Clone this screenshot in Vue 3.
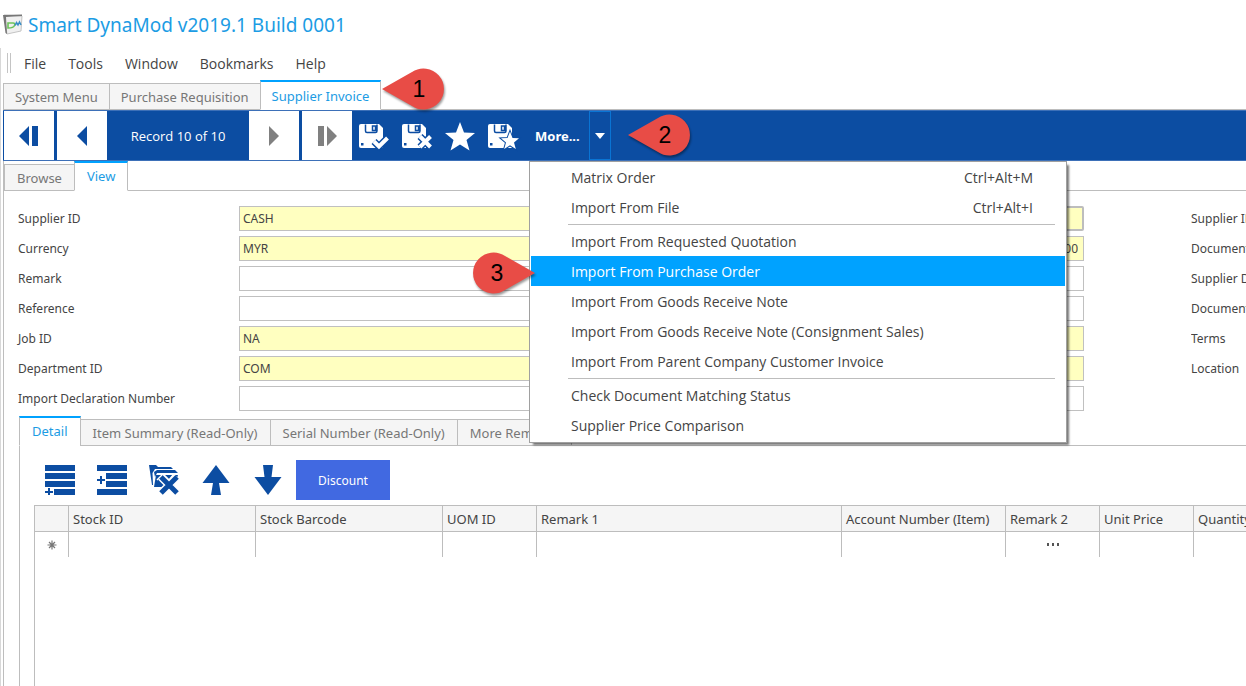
<template>
  <div class="app">
    <header class="titlebar">
      <svg
        class="logo"
        viewBox="0 0 20 21"
        aria-hidden="true"
      >
        <path
          d="M1 1 L19 2 L18 17 L4 20 Z"
          fill="#f0f0f0"
          stroke="#c4c4c4"
        />
        <path
          d="M0 1 L19 0.5 L19 2 L3 3 L4 20 L2.5 19 Z"
          fill="#777"
        />
        <path
          d="M5 9 H10 Q12.5 9 11.5 11.5 Q10.5 14 5 14 Z"
          fill="none"
          stroke="#6cc35a"
          stroke-width="1.6"
        />
        <path
          d="M12 11.5 L13.5 8.5 L15 11 L16.5 8 L18 11"
          fill="none"
          stroke="#3b8fc6"
          stroke-width="1.5"
        />
      </svg>
      <h1>Smart DynaMod v2019.1 Build 0001</h1>
    </header>

    <div class="frame">
      <nav class="menubar">
        <span class="grip" />
        <button
          v-for="m in menus"
          :key="m"
          type="button"
        >
          {{ m }}
        </button>
      </nav>

      <div class="tabs doc-tabs">
        <button
          v-for="t in docTabs"
          :key="t"
          type="button"
          class="tab"
          :class="{ active: t === docTab }"
          @click="docTab = t"
        >
          {{ t }}
        </button>
        <div class="callout-anchor">
          <svg
            class="callout"
            viewBox="0 0 66 46"
          >
            <path
              class="pin"
              d="M1 22 L31 5 A20.5 20.5 0 1 1 31 39 Z"
            />
            <text
              x="38"
              y="30"
            >1</text>
          </svg>
        </div>
      </div>

      <div class="toolbar">
        <button
          type="button"
          class="nav"
          aria-label="First"
        >
          <svg
            viewBox="0 0 20 20"
            fill="#0c4da2"
          ><path d="M0 10 L10 0 V20 Z M13 0 H19 V20 H13 Z" /></svg>
        </button>
        <button
          type="button"
          class="nav"
          aria-label="Previous"
        >
          <svg
            viewBox="0 0 20 20"
            fill="#0c4da2"
          ><path d="M5 10 L15 0 V20 Z" /></svg>
        </button>
        <span class="record">Record 10 of 10</span>
        <button
          type="button"
          class="nav"
          aria-label="Next"
        >
          <svg
            viewBox="0 0 20 20"
            fill="#808080"
          ><path d="M15 10 L5 0 V20 Z" /></svg>
        </button>
        <button
          type="button"
          class="nav"
          aria-label="Last"
        >
          <svg
            viewBox="0 0 20 20"
            fill="#808080"
          ><path d="M20 10 L10 0 V20 Z M1 0 H7 V20 H1 Z" /></svg>
        </button>

        <div class="actions">
          <button
            v-for="a in actions"
            :key="a"
            type="button"
            :aria-label="a"
          >
            <svg
              viewBox="0 0 30 30"
              fill="#fff"
            >
              <template v-if="a !== 'Bookmark'">
                <path d="M2 3 H20 L24 7 V27 H2 Q0 27 0 25 V5 Q0 3 2 3 Z" />
                <path
                  d="M6.500 3.500 V10 Q6.500 11.500 8 11.500 H16.500 Q18 11.500 18 10 V3.500 M13.500 5 H16.500 V9.500 H13.500 Z"
                  fill="none"
                  stroke="#0c4da2"
                  stroke-width="1.500"
                />
                <path
                  d="M2 22 H4.500 V24.500 H2 Z"
                  fill="#0c4da2"
                />
              </template>
              <template v-if="marks[a]">
                <path
                  :d="marks[a]"
                  class="mark halo"
                />
                <path
                  :d="marks[a]"
                  class="mark"
                />
              </template>
              <path
                v-if="a === 'Bookmark'"
                d="M15 1 L19 11.5 L30 12 L21.5 19 L24.5 29.5 L15 23.5 L5.5 29.5 L8.5 19 L0 12 L11 11.5 Z"
              />
              <path
                v-if="a === 'Save and Bookmark'"
                d="M22 10.5 L24.5 17 L31 17.3 L26 21.5 L27.8 28 L22 24.3 L16.2 28 L18 21.5 L13 17.3 L19.5 17 Z"
                class="star"
              />
            </svg>
          </button>
        </div>

        <div class="more">
          <button
            type="button"
            class="more-btn"
          >
            More...
          </button>
          <button
            type="button"
            class="more-drop"
            aria-label="Open menu"
            @click="open = !open"
          >
            <svg viewBox="0 0 10 6"><path
              d="M0 0 H10 L5 6 Z"
              fill="#fff"
            /></svg>
          </button>

          <ul
            v-if="open"
            class="popup"
          >
            <li
              v-for="item in popupItems"
              :key="item.text"
              :class="{ group: item.group }"
            >
              <button
                type="button"
                :class="{ current: item.current }"
              >
                <span>{{ item.text }}</span>
                <span v-if="item.keys">{{ item.keys }}</span>
              </button>
              <svg
                v-if="item.current"
                class="callout"
                viewBox="0 0 66 46"
              >
                <path
                  class="pin"
                  d="M63 21 L33 4 A20.5 20.5 0 1 0 33 38 Z"
                />
                <text
                  x="25"
                  y="29"
                >3</text>
              </svg>
            </li>
          </ul>
        </div>

        <svg
          class="callout inline"
          viewBox="0 0 66 46"
        >
          <path
            class="pin"
            d="M1 22 L31 5 A20.5 20.5 0 1 1 31 39 Z"
          />
          <text
            x="38"
            y="30"
          >2</text>
        </svg>
      </div>

      <div class="page">
        <div class="tabs view-tabs">
          <button
            v-for="t in viewTabs"
            :key="t"
            type="button"
            class="tab"
            :class="{ active: t === viewTab }"
            @click="viewTab = t"
          >
            {{ t }}
          </button>
        </div>

        <form
          class="form"
          @submit.prevent
        >
          <div
            v-for="f in fields"
            :key="f.id"
            class="row"
          >
            <label :for="f.id">{{ f.label }}</label>
            <div class="inputs">
              <input
                :id="f.id"
                v-model="f.value"
                type="text"
                :class="{ required: f.required }"
              >
              <input
                v-if="f.id === 'currency'"
                v-model="rate"
                type="text"
                class="required rate"
                aria-label="Rate"
              >
              <button
                v-if="f.id === 'supplier'"
                type="button"
                class="lookup"
                aria-label="Lookup"
              />
            </div>
            <span class="side">{{ f.side }}</span>
          </div>
        </form>

        <div class="tabs detail-tabs">
          <button
            v-for="t in detailTabs"
            :key="t"
            type="button"
            class="tab"
            :class="{ active: t === detailTab }"
            @click="detailTab = t"
          >
            {{ t }}
          </button>
        </div>

        <section class="detail">
          <div class="detail-tools">
            <button
              type="button"
              class="tool"
              aria-label="Add row"
            >
              <svg viewBox="0 0 30 30"><path d="M0 0 H30 V6 H0 Z M0 8 H30 V14 H0 Z M0 16 H30 V22 H0 Z M9 24 H30 V30 H9 Z M3 23 H5 V26 H8 V28 H5 V30 H3 V28 H0 V26 H3 Z" /></svg>
            </button>
            <button
              type="button"
              class="tool"
              aria-label="Insert row"
            >
              <svg viewBox="0 0 30 30"><path d="M0 0 H30 V6 H0 Z M9 8 H30 V14 H9 Z M9 16 H30 V22 H9 Z M0 24 H30 V30 H0 Z M3 11 H5 V14 H8 V16 H5 V19 H3 V16 H0 V14 H3 Z" /></svg>
            </button>
            <button
              type="button"
              class="tool"
              aria-label="Delete rows"
            >
              <svg viewBox="0 0 30 30">
                <path d="M0 0 H7 L9 2 H22 L24 4 H6 L3.500 8 L4 20 H3 Z" />
                <path d="M5 7 L8 5 H26 L29 8 H8 L6 12 Z" />
                <path d="M7 10 H29 L25 22 H5 Z" />
                <path
                  d="M8 15 L14 9 L20 15 L25 9"
                  fill="none"
                  stroke="#fff"
                  stroke-width="1.5"
                />
                <path
                  d="M12 12 L28 28 M28 12 L12 28"
                  stroke="#fff"
                  stroke-width="8"
                />
                <path
                  d="M12 12 L28 28 M28 12 L12 28"
                  stroke="#0c4da2"
                  stroke-width="5"
                />
              </svg>
            </button>
            <button
              type="button"
              class="tool"
              aria-label="Move up"
            >
              <svg viewBox="0 0 30 30"><path d="M15 0 L28.500 18 H18 L20 30 H10 L12 18 H1.500 Z" /></svg>
            </button>
            <button
              type="button"
              class="tool"
              aria-label="Move down"
            >
              <svg viewBox="0 0 30 30"><path d="M15 30 L28.500 12 H18.500 L20 0 H10 L11.500 12 H1.500 Z" /></svg>
            </button>
            <button
              type="button"
              class="discount"
            >
              Discount
            </button>
          </div>

          <div class="grid">
            <table>
              <colgroup>
                <col class="c-mark">
                <col class="c-wide">
                <col class="c-wide">
                <col class="c-small">
                <col>
                <col class="c-account">
                <col class="c-small">
                <col class="c-small">
                <col class="c-last">
              </colgroup>
              <thead>
                <tr>
                  <th />
                  <th
                    v-for="c in columns"
                    :key="c"
                  >
                    {{ c }}
                  </th>
                </tr>
              </thead>
              <tbody>
                <tr>
                  <td class="mark-cell">
                    <svg viewBox="0 0 10 10"><path
                      d="M5 0.500 V9.500 M0.500 5 H9.500 M2 2 L8 8 M8 2 L2 8"
                      stroke="#777"
                      stroke-width="1.200"
                    /></svg>
                  </td>
                  <td
                    v-for="c in columns"
                    :key="c"
                  >
                    <svg
                      v-if="c === 'Remark 2'"
                      class="dots"
                      viewBox="0 0 14 3"
                    ><path d="M1 0 H3 V3 H1 Z M6 0 H8 V3 H6 Z M11 0 H13 V3 H11 Z" /></svg>
                  </td>
                </tr>
              </tbody>
            </table>
          </div>
        </section>
      </div>
    </div>
  </div>
</template>

<script setup>
import { ref } from 'vue'

const menus = ['File', 'Tools', 'Window', 'Bookmarks', 'Help']
const docTabs = ['System Menu', 'Purchase Requisition', 'Supplier Invoice']
const viewTabs = ['Browse', 'View']
const detailTabs = ['Detail', 'Item Summary (Read-Only)', 'Serial Number (Read-Only)', 'More Remarks']

const docTab = ref('Supplier Invoice')
const viewTab = ref('View')
const detailTab = ref('Detail')
const open = ref(true)
const rate = ref('1.00')

const actions = ['Save', 'Save and Close', 'Bookmark', 'Save and Bookmark']
const marks = {
  Save: 'M15 20.5 L20 25.500 L28.500 17',
  'Save and Close': 'M18 15.500 L28.500 26 M28.500 15.500 L18 26',
}

// group: starts with a separator line
const popupItems = [
  { text: 'Matrix Order', keys: 'Ctrl+Alt+M' },
  { text: 'Import From File', keys: 'Ctrl+Alt+I' },
  { text: 'Import From Requested Quotation', group: true },
  { text: 'Import From Purchase Order', current: true },
  { text: 'Import From Goods Receive Note' },
  { text: 'Import From Goods Receive Note (Consignment Sales)' },
  { text: 'Import From Parent Company Customer Invoice' },
  { text: 'Check Document Matching Status', group: true },
  { text: 'Supplier Price Comparison' },
]

const fields = ref([
  { id: 'supplier', label: 'Supplier ID', value: 'CASH', required: true, side: 'Supplier ID' },
  { id: 'currency', label: 'Currency', value: 'MYR', required: true, side: 'Document' },
  { id: 'remark', label: 'Remark', value: '', side: 'Supplier D' },
  { id: 'reference', label: 'Reference', value: '', side: 'Document' },
  { id: 'job', label: 'Job ID', value: 'NA', required: true, side: 'Terms' },
  { id: 'department', label: 'Department ID', value: 'COM', required: true, side: 'Location' },
  { id: 'declaration', label: 'Import Declaration Number', value: '', side: '' },
])

const columns = [
  'Stock ID',
  'Stock Barcode',
  'UOM ID',
  'Remark 1',
  'Account Number (Item)',
  'Remark 2',
  'Unit Price',
  'Quantity',
]
</script>

<style>
body {
  margin: 0;
  background: #fff;
}
</style>

<style scoped>
.app {
  display: flex;
  flex-direction: column;
  height: 100vh;
  overflow: hidden;
  font-family: 'Noto Sans', Tahoma, sans-serif;
  font-size: 12px;
  color: #444;
}

.app *,
.app *::before {
  box-sizing: border-box;
}

button,
input {
  font: inherit;
  color: inherit;
  margin: 0;
}

button {
  padding: 0;
  border: 0;
  background: none;
  white-space: nowrap;
}

svg {
  display: block;
}

.titlebar {
  display: flex;
  align-items: center;
  gap: 5px;
  height: 48px;
  padding-left: 3px;
}

.logo {
  width: 20px;
  height: 21px;
}

.titlebar h1 {
  margin: 0;
  padding-top: 2px;
  font-size: 19px;
  line-height: 26px;
  font-weight: 400;
  color: #1c9ce4;
}

.frame {
  flex: 1;
  display: flex;
  flex-direction: column;
  min-height: 0;
  border-left: 1px solid #d8d8d8;
  padding-left: 2px;
}

.menubar {
  display: flex;
  align-items: center;
  height: 32px;
  padding: 0 0 2px 4px;
  font-family: 'Open Sans', 'Segoe UI', sans-serif;
  font-size: 14px;
}

.menubar button {
  margin-right: 22px;
}

.grip {
  width: 4px;
  height: 20px;
  margin-right: 13px;
  border: solid #c4c4c4;
  border-width: 0 1px;
}

/* Tabs */
.tabs {
  display: flex;
  align-items: flex-end;
  border-bottom: 1px solid #bdbdbd;
  font-size: 13px;
}

.tab {
  height: 27px;
  margin-bottom: -1px;
  padding: 0 12px;
  border: 1px solid #bdbdbd;
  background: #f5f5f5;
  color: #777;
}

.tab + .tab {
  margin-left: -1px;
}

.tab.active {
  height: 30px;
  padding-bottom: 2px;
  border-top: 2px solid #00a2ff;
  border-bottom-color: #fff;
  background: #fff;
  color: #1c9ce4;
}

.doc-tabs {
  height: 30px;
}

.doc-tabs .tab {
  padding: 0 11px;
}

/* Numbered pins */
.callout {
  width: 66px;
  height: 46px;
  overflow: visible;
  pointer-events: none;
}

.callout text {
  font-family: 'Liberation Sans', Arial, sans-serif;
  font-size: 23px;
  text-anchor: middle;
  fill: #000;
}

.pin {
  fill: #e84c46;
  filter: drop-shadow(1px 2px 1px #0006);
}

.callout-anchor {
  position: relative;
  height: 30px;
}

.callout-anchor .callout {
  position: absolute;
  top: -12px;
  left: 0;
  z-index: 3;
}

.callout.inline {
  margin-left: 16px;
}

/* Record toolbar */
.toolbar {
  display: flex;
  align-items: center;
  height: 51px;
  padding-left: 1px;
  border: solid #3d70b8;
  border-width: 1px 0;
  background: #0c4da2;
  color: #fff;
}

.nav {
  display: flex;
  align-items: center;
  justify-content: center;
  width: 50px;
  height: 49px;
  background: #fff;
}

.nav + .nav {
  margin-left: 3px;
}

.nav svg {
  width: 20px;
  height: 20px;
}

.record {
  width: 142px;
  text-align: center;
  font-family: 'Open Sans', 'Segoe UI', sans-serif;
  font-size: 13px;
}

.actions {
  display: flex;
  gap: 13px;
  padding: 0 11px 0 7px;
}

.actions svg {
  width: 30px;
  height: 30px;
  overflow: visible;
}

.mark {
  fill: none;
  stroke: #fff;
  stroke-width: 4;
}

.halo {
  stroke: #0c4da2;
  stroke-width: 7;
}

.star {
  stroke: #0c4da2;
  stroke-width: 2;
  paint-order: stroke;
}

.more {
  position: relative;
  display: flex;
  height: 49px;
}

.more-btn {
  width: 60px;
  padding-left: 6px;
  text-align: left;
  font-weight: 700;
  font-size: 13px;
}

.more-drop {
  display: flex;
  align-items: center;
  justify-content: center;
  width: 22px;
  border: 1px solid #0a74d4;
}

.more-drop svg {
  width: 10px;
  height: 6px;
}

.popup {
  position: absolute;
  top: 50px;
  left: 0;
  z-index: 2;
  width: 538px;
  margin: 0;
  padding: 0 1px 2px;
  list-style: none;
  border: 1px solid #a0a0a0;
  background: #fff;
  box-shadow: 3px 3px 2px -1px #0008;
  color: #444;
  font-family: 'Open Sans', 'Segoe UI', sans-serif;
  font-size: 14px;
}

.popup li {
  position: relative;
}

.popup button {
  display: flex;
  align-items: center;
  justify-content: space-between;
  width: 100%;
  height: 30px;
  padding: 0 32px 0 40px;
}

.popup .current {
  background: #00a2ff;
  color: #fff;
}

.group::before {
  content: '';
  display: block;
  height: 4px;
  margin: 0 10px 0 37px;
  background: linear-gradient(#fff 2px, #bdbdbd 2px, #bdbdbd 3px, #fff 3px);
}

.popup .callout {
  position: absolute;
  top: -4px;
  left: -59px;
}

/* Page */
.page {
  flex: 1;
  display: flex;
  flex-direction: column;
  min-height: 0;
  border-left: 1px solid #bdbdbd;
}

.view-tabs {
  height: 30px;
}

.form {
  display: flex;
  flex-direction: column;
  gap: 5px;
  padding: 15px 0 5px 14px;
}

.row {
  display: grid;
  grid-template-columns: 221px 1fr 55px;
  align-items: center;
}

.inputs {
  display: flex;
  margin-right: 107px;
}

.inputs input {
  flex: 1;
  min-width: 0;
  height: 25px;
  padding: 0 3px;
  border: 1px solid #c0c0c0;
  border-radius: 0;
  background: #fff;
  outline: 0;
}

.inputs .required {
  background: #ffffc0;
}

.inputs .rate {
  padding-right: 5px;
  text-align: right;
}

.lookup {
  width: 25px;
  border: 2px solid #bdbdbd;
  border-radius: 2px;
  background: #ffffc0;
}

.side {
  overflow: hidden;
  white-space: nowrap;
}

.detail-tabs {
  margin-left: 15px;
}

.detail {
  flex: 1;
  display: flex;
  flex-direction: column;
  min-height: 0;
  margin-left: 15px;
  border-left: 1px solid #bdbdbd;
  padding: 14px 0 0 14px;
}

.detail-tools {
  display: flex;
  align-items: center;
  margin-bottom: 5px;
  padding-left: 11px;
}

.tool + .tool {
  margin-left: 22px;
}

.tool svg {
  width: 30px;
  height: 30px;
  fill: #0c4da2;
}

.discount {
  width: 94px;
  height: 40px;
  margin-left: 13px;
  background: #4169e1;
  color: #fff;
}

.grid {
  flex: 1;
  border: solid #bdbdbd;
  border-width: 1px 0 0 1px;
}

table {
  width: 100%;
  table-layout: fixed;
  border-collapse: separate;
  border-spacing: 0;
}

.c-mark {
  width: 34px;
}

.c-wide {
  width: 187px;
}

.c-small {
  width: 94px;
}

.c-account {
  width: 164px;
}

.c-last {
  width: 52px;
}

th,
td {
  height: 26px;
  padding: 0 4px;
  border-right: 1px solid #bdbdbd;
}

td {
  height: 25px;
}

th:last-child,
td:last-child {
  border-right: 0;
}

th {
  overflow: hidden;
  border-bottom: 1px solid #bdbdbd;
  background: #f5f5f5;
  font-size: 13px;
  font-weight: 400;
  text-align: left;
  white-space: nowrap;
}

.mark-cell svg {
  width: 10px;
  height: 10px;
  margin: 0 auto;
}

.dots {
  width: 14px;
  height: 3px;
  margin: 0 auto;
  fill: #555;
}
</style>
